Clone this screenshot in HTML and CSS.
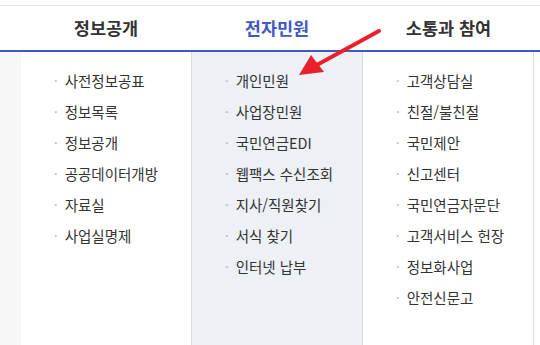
FILE: index.html
```html
<!DOCTYPE html>
<html lang="ko">
<head>
    <meta charset="UTF-8">
    <meta name="viewport" content="width=device-width, initial-scale=1.0">
    <title>전체메뉴</title>
    <link rel="stylesheet" href="styles.css">
</head>
<body>
    <div class="gnb">
        <div class="gnb-head">
            <div class="gap"></div>
            <h2 class="head-title">정보공개</h2>
            <h2 class="head-title active">전자민원</h2>
            <h2 class="head-title">소통과 참여</h2>
            <div class="gap"></div>
        </div>
        <div class="gnb-body">
            <div class="side"></div>
            <ul class="menu">
                <li>사전정보공표</li>
                <li>정보목록</li>
                <li>정보공개</li>
                <li>공공데이터개방</li>
                <li>자료실</li>
                <li>사업실명제</li>
            </ul>
            <ul class="menu menu-on">
                <li>개인민원</li>
                <li>사업장민원</li>
                <li>국민연금EDI</li>
                <li>웹팩스 수신조회</li>
                <li>지사/직원찾기</li>
                <li>서식 찾기</li>
                <li>인터넷 납부</li>
            </ul>
            <ul class="menu menu-last">
                <li>고객상담실</li>
                <li>친절/불친절</li>
                <li>국민제안</li>
                <li>신고센터</li>
                <li>국민연금자문단</li>
                <li>고객서비스 헌장</li>
                <li>정보화사업</li>
                <li>안전신문고</li>
            </ul>
            <div class="gap"></div>
        </div>

        <svg class="pointer" width="540" height="345" viewBox="0 0 540 345">
            <line x1="379" y1="31" x2="315" y2="66" stroke="#e8202a" stroke-width="4" stroke-linecap="round"/>
            <polygon points="299,75 311,55 324,72" fill="#e8202a"/>
        </svg>
    </div>
</body>
</html>
```

FILE: styles.css
```css
body {
    margin: 0;
    font-family: "Noto Sans CJK KR", "Noto Sans", sans-serif;
    color: #333;
    background: #fff;
}
.gnb {
    position: relative;
    width: 540px;
    height: 345px;
    overflow: hidden;
    padding-top: 5px;
    box-sizing: border-box;
}
.gnb-head, .gnb-body {
    display: grid;
    grid-template-columns: 21px 170px 172px 171px 1fr;
}
.gnb-head {
    border-top: 1px solid #e2e2e2;
    border-bottom: 2px solid #3f59c4;
    height: 44px;
    align-items: center;
}
.head-title {
    margin: 0 0 2px;
    font-size: 17.5px;
    font-weight: 700;
    text-align: center;
    color: #333;
}
.head-title.active {
    color: #3f59c4;
}
.gnb-body {
    height: 293px;
}
.side {
    background-color: #f7f7f7;
}
.menu {
    list-style: none;
    margin: 0;
    padding: 18px 0 0 33px;
}
.menu-on {
    background-color: #edf1f5;
    border-left: 1px solid #dcdcdc;
    border-right: 1px solid #dcdcdc;
}
.menu-last {
    border-right: 1px solid #dcdcdc;
}
.menu li {
    height: 31px;
    line-height: 22px;
    font-size: 14.5px;
    color: #333;
    display: flex;
    gap: 7px;
}
.menu li::before {
    content: "·";
    color: #aaa;
    font-size: 13px;
}
.pointer {
    position: absolute;
    left: 0;
    top: 0;
}
```
